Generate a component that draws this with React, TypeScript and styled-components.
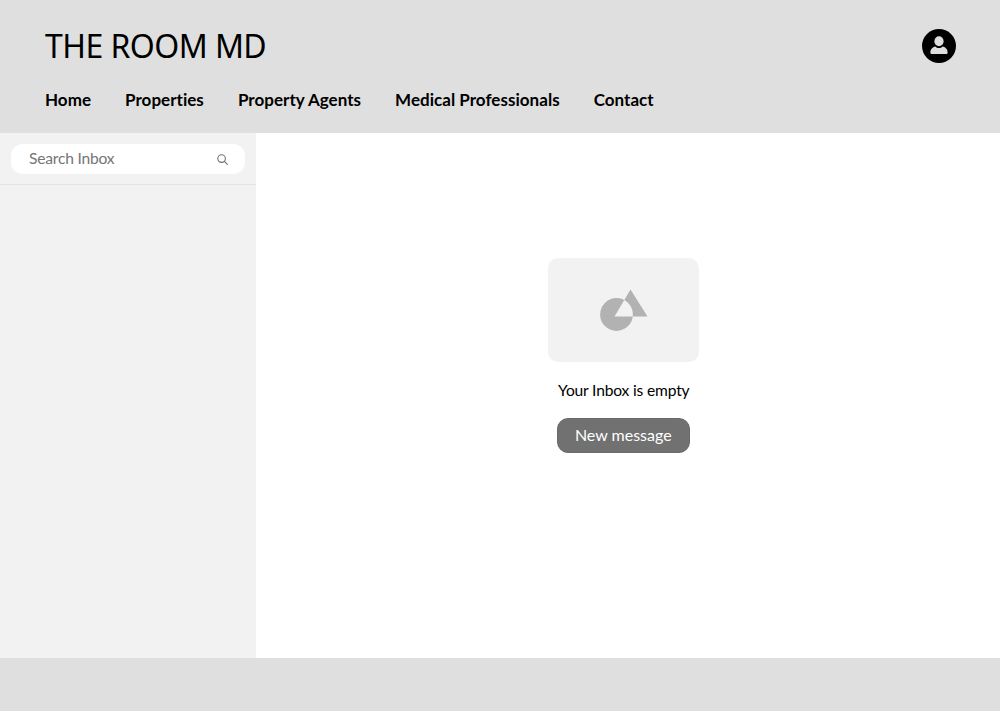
import React from "react";
import styled, { createGlobalStyle } from "styled-components";

const Global = createGlobalStyle`
  html, body { margin: 0; padding: 0; height: 100%; background: #fff; }
  body { font-family: "Lato", "Noto Sans", sans-serif; color: #000; }
  #root { height: 100%; }
  * { box-sizing: border-box; }
`;

const Page = styled.div`
  display: grid;
  grid-template-rows: 133px 525px 53px;
  height: 711px;
  overflow: hidden;
`;

const Header = styled.header`
  background: #dfdfdf;
  padding: 0 44px 0 45px;
  display: flex;
  flex-direction: column;
`;

const TopRow = styled.div`
  display: flex;
  align-items: center;
  justify-content: space-between;
  height: 91px;
`;

const Brand = styled.h1`
  margin: 0;
  font: 400 32px/44px "Noto Sans", sans-serif;
  letter-spacing: -0.55px;
  color: #000;
`;

const Avatar = styled.button`
  width: 34px;
  height: 34px;
  padding: 0 0 2px;
  border: 0;
  border-radius: 50%;
  background: #000;
  display: flex;
  align-items: center;
  justify-content: center;
`;

const Nav = styled.nav`
  display: flex;
  gap: 34px;
  height: 20px;
  margin-top: -1px;
`;

const NavLink = styled.a`
  font: 700 17px/20px "Lato", sans-serif;
  letter-spacing: 0.03px;
  color: #000;
  white-space: nowrap;
`;

const Main = styled.main`
  display: grid;
  grid-template-columns: 255.5px 1fr;
  min-height: 0;
`;

const Sidebar = styled.aside`
  background: #f2f2f2;
`;

const SearchArea = styled.div`
  height: 52px;
  padding: 11px 11px 0;
  border-bottom: 1px solid #e3e3e3;
`;

const SearchBox = styled.label`
  height: 30px;
  border-radius: 12px;
  background: #fff;
  display: flex;
  align-items: center;
  justify-content: space-between;
  padding: 0 17px 0 18px;
`;

const SearchInput = styled.input`
  border: 0;
  outline: 0;
  padding: 0 0 2px;
  min-width: 0;
  flex: 1;
  background: transparent;
  font: 400 15.6px/20px "Lato", sans-serif;
  letter-spacing: -0.2px;
  color: #6f6f6f;
  &::placeholder { color: #757575; opacity: 1; }
`;

const Content = styled.section`
  background: #fff;
  display: flex;
  flex-direction: column;
  align-items: center;
  padding: 125px 8px 0 0;
`;

const Illustration = styled.div`
  width: 151px;
  height: 104px;
  border-radius: 10px;
  background: #f2f2f2;
  display: flex;
  align-items: center;
  justify-content: center;
`;

const EmptyText = styled.p`
  margin: 17px 0 0;
  font: 400 15.6px/22px "Lato", sans-serif;
  letter-spacing: -0.17px;
  color: #000;
`;

const NewMessage = styled.button`
  margin-top: 17px;
  width: 133px;
  height: 35px;
  border: 1px solid #6a6a6a;
  border-radius: 11px;
  background: #717171;
  color: #fff;
  font: 400 16px/20px "Lato", sans-serif;
  padding: 0 1px 2px 0;
`;

const Footer = styled.footer`
  background: #dfdfdf;
`;

const links = ["Home", "Properties", "Property Agents", "Medical Professionals", "Contact"];

export default function App() {
  return (
    <Page>
      <Global />
      <Header>
        <TopRow>
          <Brand>THE ROOM MD</Brand>
          <Avatar aria-label="Account">
            <svg width="20" height="20" viewBox="0 0 20 20" fill="#dfdfdf">
              <ellipse cx="10" cy="6.2" rx="4.6" ry="5" />
              <path d="M1.4 18c-.2-3.8 1.9-5.9 5-6.6 1 1 2.2 1.5 3.6 1.5s2.6-.5 3.6-1.5c3.1.7 5.2 2.8 5 6.6-.1.6-.5.9-1 .9H2.4c-.5 0-.9-.3-1-.9z" />
            </svg>
          </Avatar>
        </TopRow>
        <Nav>
          {links.map((l) => (
            <NavLink key={l}>{l}</NavLink>
          ))}
        </Nav>
      </Header>
      <Main>
        <Sidebar>
          <SearchArea>
            <SearchBox>
              <SearchInput placeholder="Search Inbox" />
              <svg width="11" height="11" viewBox="0 0 11 11" fill="none" stroke="#6e6e6e" strokeWidth="1.1">
                <circle cx="4.6" cy="4.6" r="3.8" />
                <path d="M7.4 7.4l2.9 2.9" strokeLinecap="round" />
              </svg>
            </SearchBox>
          </SearchArea>
        </Sidebar>
        <Content>
          <Illustration>
            <svg width="48" height="42" viewBox="0 0 48 42">
              <path
                fill="#b2b2b2"
                fillRule="evenodd"
                d="M30.5 .5L47.5 27.5H14.5ZM.1 25.5a16.4 16.4 0 1 0 32.8 0a16.4 16.4 0 1 0-32.8 0Z"
              />
            </svg>
          </Illustration>
          <EmptyText>Your Inbox is empty</EmptyText>
          <NewMessage>New message</NewMessage>
        </Content>
      </Main>
      <Footer />
    </Page>
  );
}
